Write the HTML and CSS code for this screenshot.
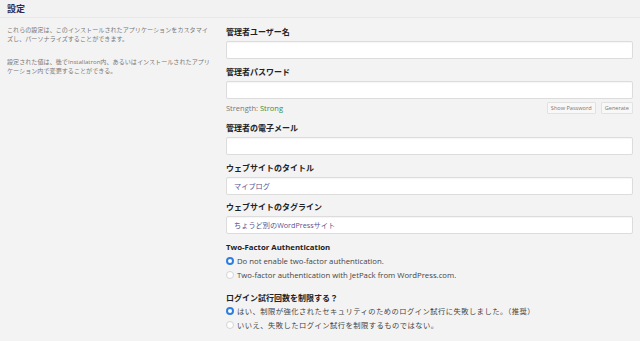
FILE: index.html
```html
<!DOCTYPE html>
<html lang="ja">
<head>
<meta charset="utf-8">
<link rel="stylesheet" href="styles.css">
</head>
<body>
<div class="page">
  <div class="header"><h1 class="title">設定</h1></div>
  <div class="content">
    <div class="intro">
      <p>これらの設定は、このインストールされたアプリケーションをカスタマイズし、パーソナライズすることができます。</p>
      <p>設定された値は、後でInstallatron内、あるいはインストールされたアプリケーション内で変更することができる。</p>
    </div>
    <div class="form">
      <div class="field">
        <div class="label">管理者ユーザー名</div>
        <div class="input"></div>
      </div>
      <div class="field pw">
        <div class="label">管理者パスワード</div>
        <div class="input"></div>
        <div class="strength-row">
          <span class="strength">Strength: <span class="strong">Strong</span></span>
          <span class="buttons"><span class="btn">Show Password</span><span class="btn">Generate</span></span>
        </div>
      </div>
      <div class="field tight">
        <div class="label">管理者の電子メール</div>
        <div class="input"></div>
      </div>
      <div class="field tight">
        <div class="label">ウェブサイトのタイトル</div>
        <div class="input">マイブログ</div>
      </div>
      <div class="field tight">
        <div class="label">ウェブサイトのタグライン</div>
        <div class="input">ちょうど別のWordPressサイト</div>
      </div>
      <div class="group first">
        <div class="label en">Two-Factor Authentication</div>
        <div class="radio"><span class="dot on"></span>Do not enable two-factor authentication.</div>
        <div class="radio"><span class="dot"></span>Two-factor authentication with JetPack from WordPress.com.</div>
      </div>
      <div class="group second">
        <div class="label">ログイン試行回数を制限する？</div>
        <div class="radio ja"><span class="dot on"></span>はい、制限が強化されたセキュリティのためのログイン試行に失敗しました。（推奨）</div>
        <div class="radio ja"><span class="dot"></span>いいえ、失敗したログイン試行を制限するものではない。</div>
      </div>
    </div>
  </div>
</div>
</body>
</html>
```
FILE: styles.css
```css
* { box-sizing: border-box; }
html, body { margin: 0; padding: 0; }
body {
  background: #f3f3f3;
  font-family: "Open Sans", "Noto Sans CJK JP", sans-serif;
  color: #333;
  width: 640px;
  height: 341px;
  overflow: hidden;
}
.header {
  height: 18px;
  padding: 3px 7px 0;
  border-bottom: 1px solid #e8e8e8;
  background: #f2f2f2;
}
.title {
  margin: 0;
  font-size: 9px;
  line-height: 12px;
  font-weight: 700;
  color: #2b2b55;
}
.content {
  display: flex;
  padding: 0 7px 0 7px;
}
.intro {
  width: 212px;
  padding-top: 7px;
  flex: none;
}
.intro p {
  margin: 0 0 14px;
  font-size: 6.1px;
  line-height: 9px;
  color: #777;
  width: 204px;
}
.form {
  flex: 1;
  padding-left: 7px;
  padding-top: 8px;
}
.field { margin-bottom: 7px; }
.field.tight { margin-bottom: 6.5px; }
.label {
  font-size: 8px;
  line-height: 12px;
  font-weight: 700;
  color: #222;
  margin-bottom: 3px;
}
.label.en { font-size: 7.8px; }
.input {
  height: 18px;
  background: #fff;
  border: 1px solid #dcdcdc;
  border-radius: 2px;
  box-shadow: inset 0 1px 1px rgba(0,0,0,0.04);
  font-size: 7.2px;
  line-height: 16px;
  padding: 0 7px;
  color: #5c4f8e;
}
.strength-row {
  display: flex;
  justify-content: space-between;
  align-items: center;
  height: 15px;
  margin-top: 1px;
}
.strength { font-size: 7.5px; color: #777; }
.strong { color: #3d8b3d; }
.buttons { display: flex; gap: 5px; }
.btn {
  font-size: 5.6px;
  line-height: 10px;
  padding: 0 3px;
  border: 1px solid #e2e2e2;
  background: #f8f8f8;
  color: #777;
  border-radius: 1px;
}
.group.first { margin-bottom: 10.5px; }
.group.first .label { margin-bottom: 1px; }
.group.second .label { margin-bottom: 0; }
.radio {
  display: flex;
  align-items: center;
  font-size: 7.75px;
  line-height: 14px;
  color: #444;
}
.radio.ja { font-size: 7.3px; letter-spacing: 0.45px; }
.dot {
  width: 8px;
  height: 8px;
  border-radius: 50%;
  border: 1px solid #d4d4d4;
  background: #fff;
  margin-right: 3px;
  flex: none;
}
.dot.on {
  border: 2.3px solid #2e7de0;
  background: #fff;
}
```
